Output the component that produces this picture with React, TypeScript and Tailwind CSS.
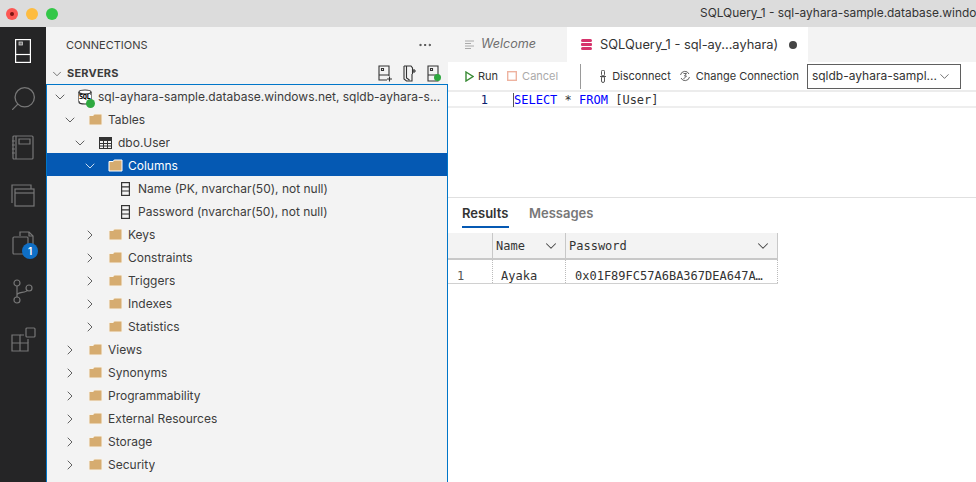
import { ChevronDown, ChevronRight, Ellipsis, Search } from 'lucide-react';

const sans = 'font-["Inter",sans-serif]';
const indents = ['pl-[7px]', 'pl-[17px]', 'pl-[27px]', 'pl-[37px]', 'pl-[47px]'];

function Folder({ selected }: { selected?: boolean }) {
  return (
    <svg width="15" height="13" viewBox="0 0 15 13" className="shrink-0">
      <path
        d="M1 12V2.5h4.2l1-1.5H14v11z"
        fill="#d6ac70"
        stroke={selected ? '#ffffff' : '#f8f3ea'}
        strokeWidth="1"
      />
    </svg>
  );
}

function TableIcon() {
  return (
    <svg width="13" height="12" viewBox="0 0 13 12" className="shrink-0" fill="none" stroke="#333" strokeWidth="1">
      <rect x="0.5" y="0.5" width="12" height="11" />
      <rect x="0.5" y="0.5" width="12" height="3" fill="#333" />
      <path d="M4.5 3v8.5M8.5 3v8.5M0.5 6.5h12M0.5 9h12" />
    </svg>
  );
}

function ColumnIcon() {
  return (
    <svg width="9" height="14" viewBox="0 0 9 14" className="shrink-0" fill="none" stroke="#333" strokeWidth="1.2">
      <rect x="0.6" y="0.6" width="7.8" height="12.8" />
      <path d="M0.6 4.8h7.8M0.6 9h7.8" />
    </svg>
  );
}

function ServerIcon() {
  return (
    <div className="relative w-[16px] h-[16px] shrink-0">
      <svg width="14" height="16" viewBox="0 0 14 16" fill="none">
        <path d="M1 3v10c0 1.2 2.6 2 6 2s6-.8 6-2V3" fill="#fff" stroke="#333" strokeWidth="1.2" />
        <ellipse cx="7" cy="3" rx="6" ry="2" fill="#fff" stroke="#333" strokeWidth="1.2" />
        <rect x="1" y="6" width="12" height="6" fill="#fff" />
      </svg>
      <span className="absolute left-[1px] top-[5px] text-[7px] leading-[7px] font-bold text-black tracking-[-0.5px] font-['DejaVu_Sans_Mono',monospace]">SQL</span>
      <span className="absolute left-[8px] top-[10px] w-[9px] h-[9px] rounded-full bg-[#2ea83f]" />
    </div>
  );
}

type Kind = 'folder' | 'table' | 'column' | 'server';

const kindBox: Record<Kind, string> = {
  folder: 'ml-[12px] gap-[5px]',
  table: 'ml-[13px] gap-[6px]',
  column: 'ml-[15px] gap-[8px]',
  server: 'ml-[12px] gap-[4px]',
};

function Row({ level, open, leaf, kind, label, selected }: { level: number; open?: boolean; leaf?: boolean; kind: Kind; label: string; selected?: boolean }) {
  return (
    <div className={`flex items-center h-[23px] pt-[2px] ${indents[level]} ${selected ? 'bg-[#0559b3] text-white' : 'text-[#3c3c3c]'}`}>
      <div className="w-[12px] shrink-0 flex justify-center">
        {!leaf &&
          (open ? (
            <ChevronDown size={16} strokeWidth={1.2} className="shrink-0" color={selected ? '#fff' : '#3c3c3c'} />
          ) : (
            <ChevronRight size={16} strokeWidth={1.2} className="shrink-0" color="#3c3c3c" />
          ))}
      </div>
      <div className={`flex items-center min-w-0 ${kindBox[kind]}`}>
        {kind === 'folder' && <Folder selected={selected} />}
        {kind === 'table' && <TableIcon />}
        {kind === 'column' && <ColumnIcon />}
        {kind === 'server' && <ServerIcon />}
        <span className="text-[12px] truncate">{label}</span>
      </div>
    </div>
  );
}

function ActivityBar() {
  return (
    <div className="w-[46px] shrink-0 bg-[#252526] flex flex-col items-center">
      <div className="h-[48px] flex items-center justify-center">
        <svg width="16" height="24" viewBox="0 0 16 24" fill="none" stroke="#fff" strokeWidth="1.2">
          <rect x="0.6" y="0.6" width="14.8" height="22.8" />
          <path d="M0.6 15.5h14.8" />
          <rect x="4" y="3" width="3.5" height="3" fill="#777" stroke="#ccc" strokeWidth="0.8" />
        </svg>
      </div>
      <div className="h-[46px] flex items-center justify-center">
        <Search size={29} strokeWidth={1.1} color="#777777" className="-scale-x-100" />
      </div>
      <div className="h-[52px] flex items-center justify-center">
        <svg width="24" height="25" viewBox="0 0 24 25" fill="none" stroke="#777777" strokeWidth="1.2">
          <rect x="2" y="1" width="20" height="23" rx="1" />
          <path d="M5 1v23M8 4h11v5H8zM1 6h3M1 10h3M1 14h3M1 18h3" />
        </svg>
      </div>
      <div className="h-[44px] flex items-center justify-center">
        <svg width="24" height="23" viewBox="0 0 24 23" fill="none" stroke="#777777" strokeWidth="1.2">
          <path d="M1 19V1h19v4" />
          <rect x="4" y="5" width="19" height="17" />
          <path d="M4 9h19" />
        </svg>
      </div>
      <div className="h-[52px] flex items-center justify-center relative w-full">
        <svg width="22" height="24" viewBox="0 0 22 24" fill="none" stroke="#777777" strokeWidth="1.2">
          <path d="M8 5V1h9l4 4v15h-5" />
          <path d="M17 1v4h4" />
          <rect x="1" y="6" width="15" height="17" rx="1" />
        </svg>
        <span className="absolute left-[22px] top-[26px] w-[16px] h-[16px] rounded-full bg-[#0f6fc6] text-white text-[10px] font-semibold flex items-center justify-center">1</span>
      </div>
      <div className="h-[44px] flex items-center justify-center">
        <svg width="20" height="25" viewBox="0 0 20 25" fill="none" stroke="#777777" strokeWidth="1.2">
          <circle cx="4" cy="4" r="3" />
          <circle cx="16" cy="9" r="3" />
          <circle cx="4" cy="21" r="3" />
          <path d="M4 7v11M4 16c0-3 9-2 11-5" />
        </svg>
      </div>
      <div className="h-[52px] flex items-center justify-center">
        <svg width="25" height="25" viewBox="0 0 25 25" fill="none" stroke="#777777" strokeWidth="1.2">
          <path d="M1 8h8v8H1zM1 16h8v8H1zM9 16h8v8H9z" />
          <rect x="15" y="1" width="9" height="9" rx="1" />
          <path d="M9 8h4M17 12v4" />
        </svg>
      </div>
    </div>
  );
}

function Sidebar() {
  return (
    <div className="w-[402px] shrink-0 bg-[#f3f3f3] flex flex-col min-h-0">
      <div className="h-[36px] flex items-center justify-between pl-[20px] pr-[15px] shrink-0">
        <span className="text-[11px] text-[#3c3c3c]">CONNECTIONS</span>
        <Ellipsis size={16} strokeWidth={1.5} color="#424242" />
      </div>
      <div className="h-[21px] flex items-center justify-between pl-[4px] pr-[8px] shrink-0">
        <div className="flex items-center gap-[3px]">
          <ChevronDown size={14} strokeWidth={1.2} color="#424242" />
          <span className="text-[11px] font-bold text-[#3c3c3c] tracking-[0.2px]">SERVERS</span>
        </div>
        <div className="flex items-center gap-[11px]">
          <svg width="14" height="17" viewBox="0 0 14 17" fill="none" stroke="#333" strokeWidth="1.1">
            <path d="M9 15H1V1h10v10M1 10h10M3.5 3.5h2v2h-2zM9 14h5M11.5 11.5v5" />
          </svg>
          <svg width="13" height="17" viewBox="0 0 13 17" fill="none" stroke="#333" strokeWidth="1.1">
            <path d="M1 1h7l1.5 2v6M1 1v13l2.5 2H9V9M3.5 1v12l3 2M9 6h4M11 4v4" />
          </svg>
          <div className="relative">
            <svg width="13" height="17" viewBox="0 0 13 17" fill="none" stroke="#333" strokeWidth="1.1">
              <path d="M1 1h10v15H1zM1 10h10M3.5 3.5h2v2h-2z" />
            </svg>
            <span className="absolute left-[7px] top-[9px] w-[7px] h-[7px] rounded-full bg-[#2ea83f]" />
          </div>
        </div>
      </div>
      <div className="flex-1 border border-b-0 border-[#0076c9] overflow-hidden min-h-0">
        <div className="-mt-px">
          <Row level={0} open kind="server" label="sql-ayhara-sample.database.windows.net, sqldb-ayhara-s..." />
          <Row level={1} open kind="folder" label="Tables" />
          <Row level={2} open kind="table" label="dbo.User" />
          <Row level={3} open kind="folder" label="Columns" selected />
          <Row level={4} leaf kind="column" label="Name (PK, nvarchar(50), not null)" />
          <Row level={4} leaf kind="column" label="Password (nvarchar(50), not null)" />
          {['Keys', 'Constraints', 'Triggers', 'Indexes', 'Statistics'].map((l) => (
            <Row key={l} level={3} kind="folder" label={l} />
          ))}
          {['Views', 'Synonyms', 'Programmability', 'External Resources', 'Storage', 'Security'].map((l) => (
            <Row key={l} level={1} kind="folder" label={l} />
          ))}
        </div>
      </div>
    </div>
  );
}

function Editor() {
  return (
    <div className="flex-1 bg-white flex flex-col min-w-0">
      <div className="h-[35px] bg-[#f3f3f3] flex shrink-0">
        <div className="w-[119px] flex items-center pl-[17px] gap-[6px]">
          <svg width="10" height="10" viewBox="0 0 10 10" stroke="#aaa" strokeWidth="1">
            <path d="M0 1h9M0 3.5h6M0 6h9M0 8.5h6" />
          </svg>
          <span className="text-[12.6px] italic text-[#6f6f6f]">Welcome</span>
        </div>
        <div className="w-[241px] bg-white flex items-center pl-[14px] gap-[8px]">
          <svg width="11" height="11" viewBox="0 0 11 11" className="shrink-0">
            <rect x="0" y="0" width="11" height="3" rx="1.5" fill="#d6336c" />
            <rect x="0" y="4" width="11" height="3" rx="1" fill="#d6336c" />
            <rect x="0" y="8" width="11" height="3" rx="1.5" fill="#d6336c" />
          </svg>
          <span className="text-[12.85px] text-[#333]">SQLQuery_1 - sql-ay...ayhara)</span>
          <span className="ml-[3px] w-[8px] h-[8px] rounded-full bg-[#444]" />
        </div>
      </div>
      <div className="h-[30px] flex items-center pl-[17px] shrink-0 border-b-2 border-[#ececec] text-[11px] text-[#333]">
        <svg width="9" height="11" viewBox="0 0 9 11" fill="none" stroke="#388a34" strokeWidth="1.4">
          <path d="M1 1l7 4.5L1 10z" />
        </svg>
        <span className="ml-[4px] pt-[1px]">Run</span>
        <svg width="10" height="10" viewBox="0 0 10 10" fill="none" stroke="#eeb3a0" strokeWidth="1.4" className="ml-[9px]">
          <rect x="0.7" y="0.7" width="8.6" height="8.6" />
        </svg>
        <span className="ml-[5px] pt-[1px] text-[#aaa]">Cancel</span>
        <div className="w-px h-[25px] bg-[#9a9a9a] ml-[22px]" />
        <svg width="8" height="13" viewBox="0 0 8 13" fill="none" stroke="#444" strokeWidth="0.9" className="ml-[18px]">
          <path d="M2.5 1.5a1.5 1.5 0 0 1 3 0v3a1.5 1.5 0 0 1-3 0zM2.5 8a1.5 1.5 0 0 1 3 0v3a1.5 1.5 0 0 1-3 0zM1 6.5h6" />
        </svg>
        <span className="ml-[5px] pt-[1px]">Disconnect</span>
        <svg width="12" height="12" viewBox="0 0 12 12" fill="none" stroke="#555" strokeWidth="0.9" className="ml-[8px]">
          <path d="M1.5 5A4.5 4.5 0 0 1 10 4M10.5 7A4.5 4.5 0 0 1 2 8M4.5 3.5h3L5.5 6h2l-3 3" />
        </svg>
        <span className="ml-[5px] pt-[1px]">Change Connection</span>
        <div className="ml-[8px] w-[154px] h-[25px] border border-[#5f5f5f] flex items-center justify-between pl-[4px] pr-[8px]">
          <span className="text-[12px]">sqldb-ayhara-sampl...</span>
          <ChevronDown size={15} strokeWidth={1.2} color="#444" />
        </div>
      </div>
      <div className="h-[16px] pt-[2px] shrink-0 border-b-2 border-[#eeeeee] flex items-center font-['DejaVu_Sans_Mono',monospace] text-[12px] leading-[14px]">
        <span className="w-[40px] text-right text-[#0b216f]">1</span>
        <span className="ml-[25px] text-[#333] border-l border-[#555]">
          <span className="text-[#0000ff]">SELECT</span> * <span className="text-[#0000ff]">FROM</span> [User]
        </span>
      </div>
      <div className="h-[1px] mt-[89px] bg-[#e0e0e0] shrink-0" />
      <div className="h-[35px] flex items-start pl-[14px] gap-[20px] pt-[7px] shrink-0">
        <div className="flex flex-col">
          <span className="text-[13px] font-semibold text-[#333] leading-[16px]">Results</span>
          <div className="h-[2px] mt-[5px] bg-[#0559b3] w-[47px]" />
        </div>
        <span className="text-[13px] font-semibold text-[#777] leading-[16px]">Messages</span>
      </div>
      <div className="w-[330px] font-['DejaVu_Sans_Mono',monospace] text-[12px] text-[#333]">
        <div className="h-[27px] flex bg-[#f3f3f3] border-b-2 border-[#c8c8c8]">
          <div className="w-[44px]" />
          <div className="w-[73px] border-l border-[#c8c8c8] flex items-center justify-between pl-[3px] pr-[5px]">
            <span>Name</span>
            <ChevronDown size={18} strokeWidth={1.4} color="#444" />
          </div>
          <div className="flex-1 border-x border-[#c8c8c8] flex items-center justify-between pl-[3px] pr-[5px]">
            <span>Password</span>
            <ChevronDown size={18} strokeWidth={1.4} color="#444" />
          </div>
        </div>
        <div className="h-[24px] flex border-b border-[#d0d0d0]">
          <div className="w-[44px] pl-[9px] pt-[8px] flex items-center text-[#555]">1</div>
          <div className="w-[73px] border-l border-dotted border-[#bbb] pl-[8px] pt-[8px] flex items-center">Ayaka</div>
          <div className="flex-1 border-x border-dotted border-[#bbb] pl-[9px] pt-[8px] flex items-center whitespace-nowrap overflow-hidden">0x01F89FC57A6BA367DEA647A…</div>
        </div>
      </div>
    </div>
  );
}

export default function App() {
  return (
    <div className={`w-[976px] h-[482px] overflow-hidden flex flex-col bg-white ${sans}`}>
      <div className="h-[27px] shrink-0 bg-[#dcdcdc] flex items-center relative">
        <div className="flex items-center gap-[8px] pl-[6px]">
          <span className="w-[12px] h-[12px] rounded-full bg-[#fc5753] flex items-center justify-center">
            <span className="w-[4px] h-[4px] rounded-full bg-[#7d1512]" />
          </span>
          <span className="w-[12px] h-[12px] rounded-full bg-[#fdbc40]" />
          <span className="w-[12px] h-[12px] rounded-full bg-[#33c748]" />
        </div>
        <span className="absolute left-[700px] top-[4px] text-[11.9px] leading-[18px] text-[#333] whitespace-nowrap">SQLQuery_1 - sql-ayhara-sample.database.windo</span>
      </div>
      <div className="flex-1 flex min-h-0">
        <ActivityBar />
        <Sidebar />
        <Editor />
      </div>
    </div>
  );
}
